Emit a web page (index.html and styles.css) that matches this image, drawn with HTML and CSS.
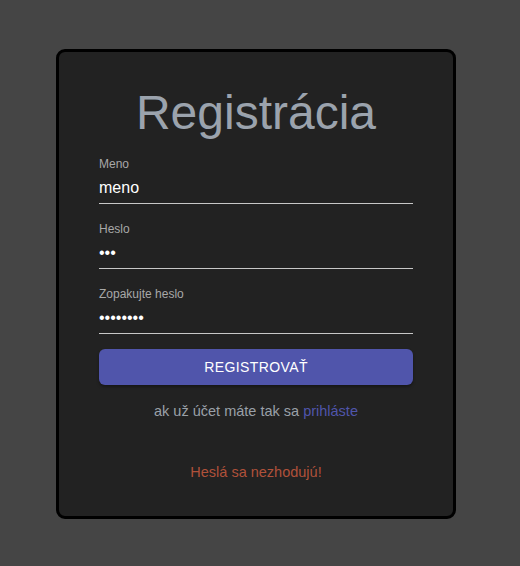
FILE: index.html
```html
<!DOCTYPE html>
<html lang="sk">
<head>
<meta charset="utf-8">
<link rel="stylesheet" href="styles.css">
</head>
<body>
<div class="page">
  <form class="card">
    <h1 class="title">Registrácia</h1>
    <div class="field">
      <label class="label">Meno</label>
      <div class="value">meno</div>
    </div>
    <div class="field">
      <label class="label">Heslo</label>
      <div class="value">•••</div>
    </div>
    <div class="field">
      <label class="label">Zopakujte heslo</label>
      <div class="value">••••••••</div>
    </div>
    <button type="button" class="btn">REGISTROVAŤ</button>
    <p class="login">ak už účet máte tak sa <a class="link">prihláste</a></p>
    <p class="error">Heslá sa nezhodujú!</p>
  </form>
</div>
</body>
</html>
```
FILE: styles.css
```css
html, body {
  margin: 0;
  padding: 0;
  background: #454545;
  height: 100%;
}
body {
  font-family: "Liberation Sans", Arial, sans-serif;
}
.page {
  padding: 49px 0 0 56px;
}
.card {
  box-sizing: border-box;
  width: 400px;
  height: 470px;
  background: #222222;
  border: 3px solid #000;
  border-radius: 9px;
  padding: 0 40px;
  display: flex;
  flex-direction: column;
}
.title {
  margin: 33px 0 0;
  font-weight: 400;
  font-size: 48px;
  line-height: 56px;
  color: #9ba3ad;
  text-align: center;
}
.field {
  display: flex;
  flex-direction: column;
  border-bottom: 1px solid #c8c8c8;
}
.field:first-of-type {
  margin-top: 16px;
}
.field + .field {
  margin-top: 18px;
}
.label {
  font-size: 12px;
  line-height: 14px;
  color: #a8a8a8;
}
.value {
  font-size: 16px;
  line-height: 19px;
  color: #ffffff;
  padding: 7px 0 6px;
}
.btn {
  margin-top: 15px;
  height: 36px;
  border: none;
  border-radius: 6px;
  background: #5055ab;
  color: #ffffff;
  font-family: "Liberation Sans", Arial, sans-serif;
  font-size: 14px;
  letter-spacing: 0.4px;
  box-shadow: 0 2px 3px rgba(0,0,0,0.35);
}
.login {
  margin: 17px 0 0;
  text-align: center;
  font-size: 14.5px;
  line-height: 18px;
  color: #9aa0a8;
}
.link {
  color: #5055ab;
}
.error {
  margin: 43px 0 0;
  text-align: center;
  font-size: 14.5px;
  line-height: 18px;
  color: #b0513a;
}
```
